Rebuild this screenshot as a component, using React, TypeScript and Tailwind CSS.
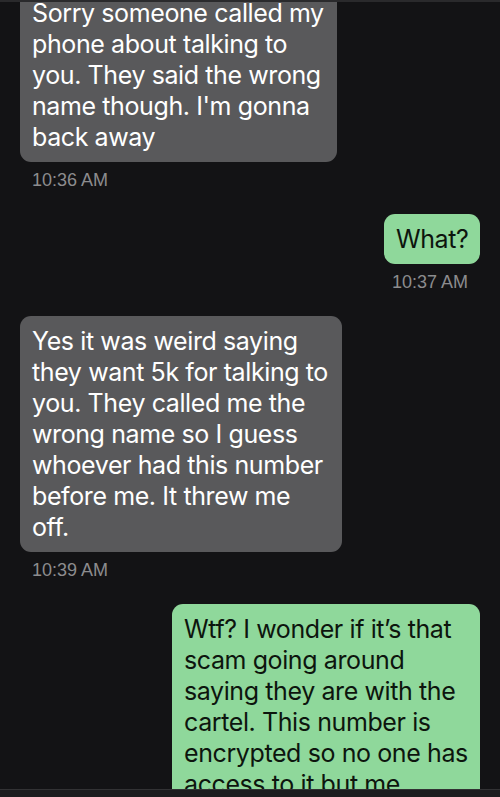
type Msg = {
    id: number;
    mine: boolean;
    lines: string[];
    time: string;
    width: string;
};

const messages: Msg[] = [
    {
        id: 1,
        mine: false,
        width: "w-[317px]",
        lines: [
            "Sorry someone called my",
            "phone about talking to",
            "you. They said the wrong",
            "name though. I'm gonna",
            "back away",
        ],
        time: "10:36 AM",
    },
    { id: 2, mine: true, width: "w-[96px]", lines: ["What?"], time: "10:37 AM" },
    {
        id: 3,
        mine: false,
        width: "w-[322px]",
        lines: [
            "Yes it was weird saying",
            "they want 5k for talking to",
            "you. They called me the",
            "wrong name so I guess",
            "whoever had this number",
            "before me. It threw me",
            "off.",
        ],
        time: "10:39 AM",
    },
    {
        id: 4,
        mine: true,
        width: "w-[308px]",
        lines: [
            "Wtf? I wonder if it\u2019s that",
            "scam going around",
            "saying they are with the",
            "cartel. This number is",
            "encrypted so no one has",
            "access to it but me",
        ],
        time: "10:40 AM",
    },
];

function Bubble({ msg }: { msg: Msg }) {
    return (
        <div className={msg.mine ? "flex flex-col items-end" : "flex flex-col items-start"}>
            <div
                className={`${msg.width} rounded-[11px] px-[12px] pt-[10px] pb-[9px] text-[25px] leading-[31px] tracking-[-0.4px] whitespace-nowrap ${
                    msg.mine ? "bg-[#8fd89b] text-[#0d150e]" : "bg-[#59595b] text-white"
                }`}
            >
                {msg.lines.map((l, i) => (
                    <div key={i}>{l}</div>
                ))}
            </div>
            <div
                className={`mt-[7px] text-[18px] leading-[22px] text-[#8c8c8e] ${
                    msg.mine ? "pr-[12px]" : "pl-[12px]"
                }`}
                style={{ fontFamily: '"Liberation Sans", Arial, sans-serif' }}
            >
                {msg.time}
            </div>
        </div>
    );
}

export default function App() {
    return (
        <div
            className="w-[500px] h-[797px] bg-[#131315] flex flex-col overflow-hidden"
            style={{ fontFamily: "Inter, sans-serif" }}
        >
            <div className="h-[2px] bg-[#2a2a2c] shrink-0" />
            <div className="flex-1 overflow-hidden px-[20px]">
                <div className="-mt-[14px] flex flex-col gap-[23px]">
                    {messages.map((m) => (
                        <Bubble key={m.id} msg={m} />
                    ))}
                </div>
            </div>
            <div className="h-[8px] shrink-0 bg-[#1c1c1e] border-t border-[#323234]" />
        </div>
    );
}
